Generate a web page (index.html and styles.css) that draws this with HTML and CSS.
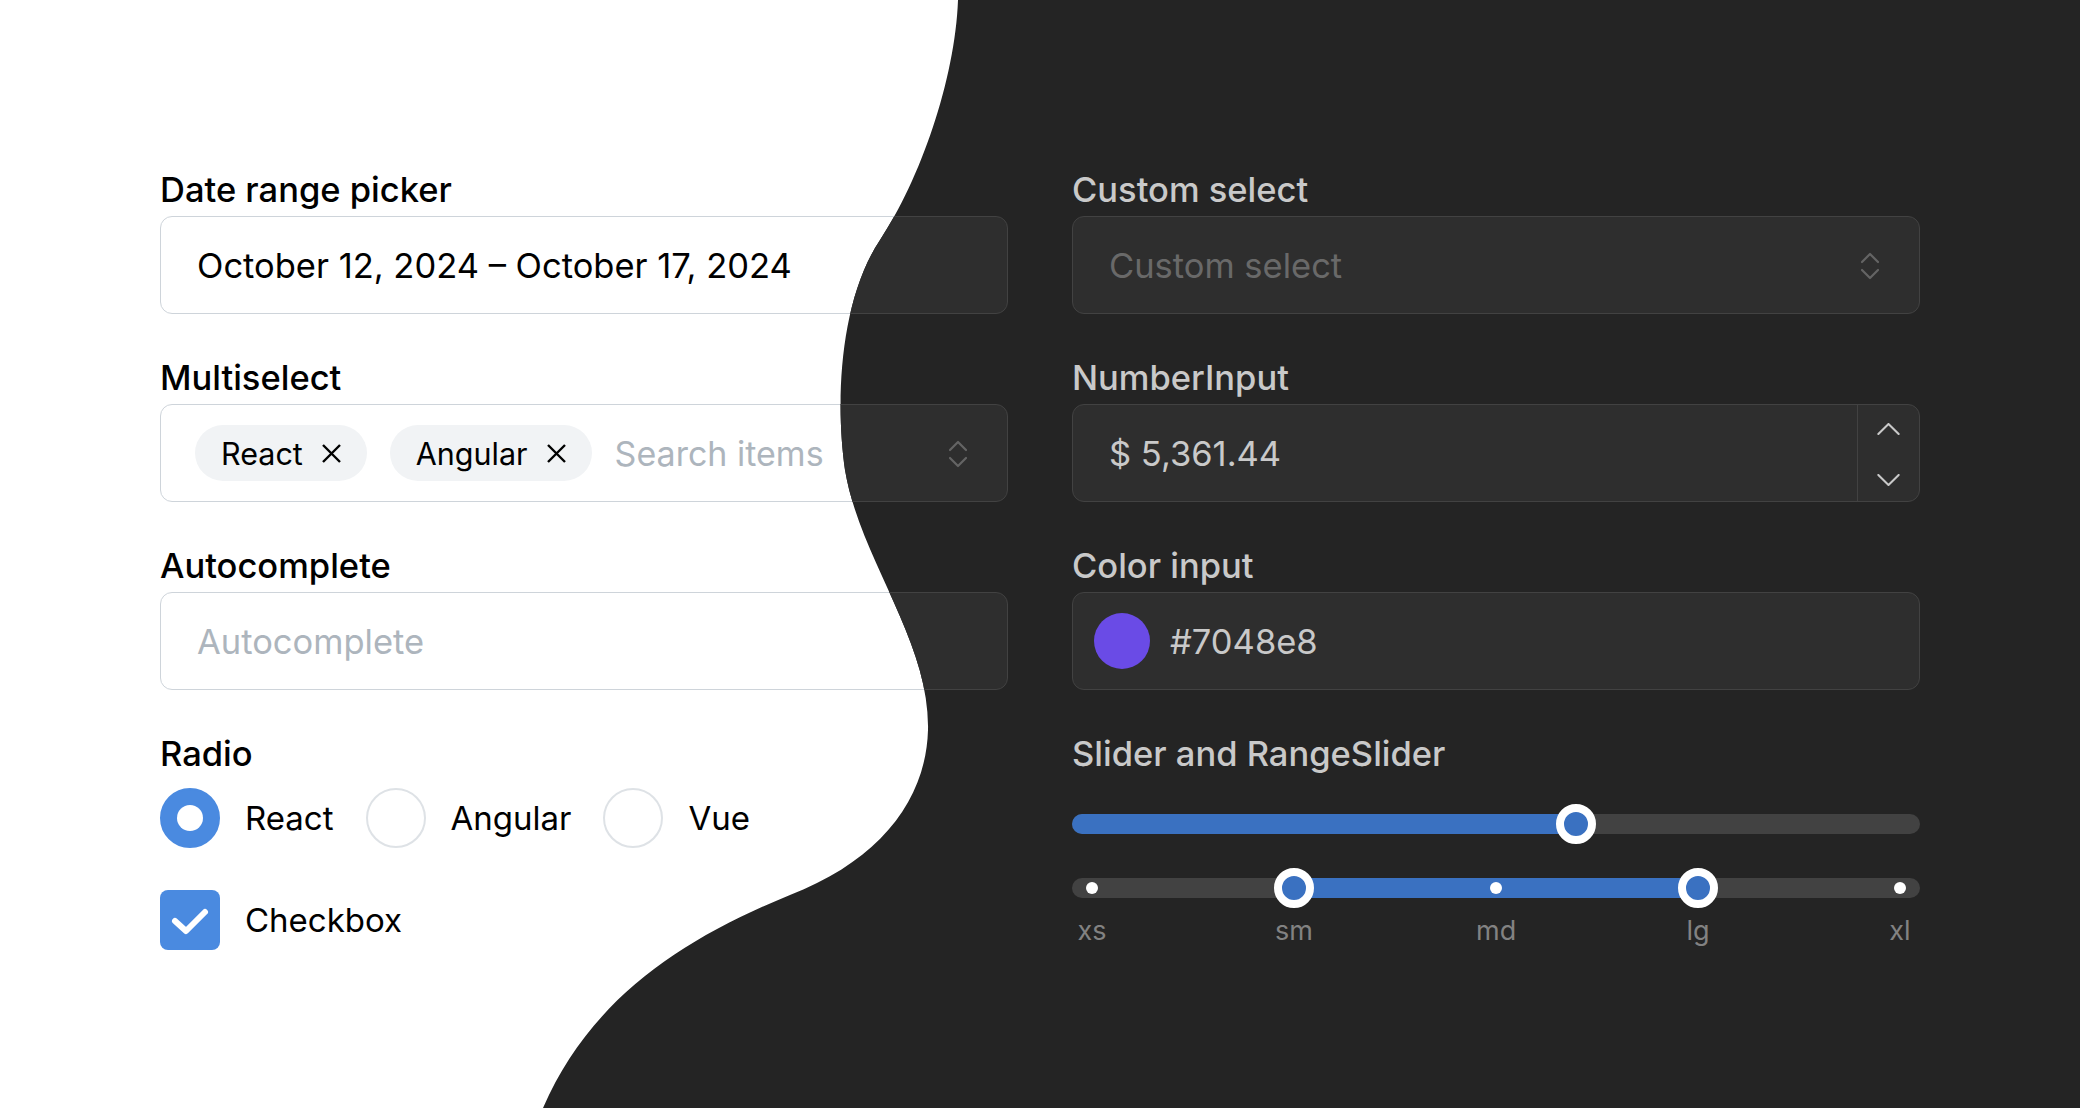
FILE: index.html
```html
<!DOCTYPE html>
<html lang="en">
<head>
<meta charset="utf-8">
<title>Form components</title>
<link rel="stylesheet" href="styles.css">
</head>
<body>
<div class="stage">
  <div class="scene light">
    <div class="col">
      <div class="field">
        <div class="label">Date range picker</div>
        <div class="input"><span class="value">October 12, 2024 – October 17, 2024</span></div>
      </div>
      <div class="field">
        <div class="label">Multiselect</div>
        <div class="input multi">
          <span class="chip">React<svg class="x" viewBox="0 0 21 21"><path d="M2 2L19 19M19 2L2 19"/></svg></span>
          <span class="chip">Angular<svg class="x" viewBox="0 0 21 21"><path d="M2 2L19 19M19 2L2 19"/></svg></span>
          <span class="placeholder">Search items</span>
          <svg class="selector" viewBox="0 0 18 28"><path d="M1 10L9 2L17 10M1 18L9 26L17 18"/></svg>
        </div>
      </div>
      <div class="field">
        <div class="label">Autocomplete</div>
        <div class="input"><span class="placeholder">Autocomplete</span></div>
      </div>
      <div class="field">
        <div class="label">Radio</div>
        <div class="radios">
          <span class="radio checked"></span><span class="opt">React</span>
          <span class="radio"></span><span class="opt">Angular</span>
          <span class="radio"></span><span class="opt">Vue</span>
        </div>
        <div class="checkrow">
          <span class="checkbox"><svg viewBox="0 0 60 60"><path d="M15 31L26 41L45 22"/></svg></span><span class="opt">Checkbox</span>
        </div>
      </div>
    </div>
    <div class="col">
      <div class="field">
        <div class="label">Custom select</div>
        <div class="input"><span class="placeholder">Custom select</span><svg class="selector" viewBox="0 0 18 28"><path d="M1 10L9 2L17 10M1 18L9 26L17 18"/></svg></div>
      </div>
      <div class="field">
        <div class="label">NumberInput</div>
        <div class="input number"><span class="value">$ 5,361.44</span>
          <div class="stepper">
            <span class="step"><svg viewBox="0 0 24 13"><path d="M1 12L12 1L23 12"/></svg></span>
            <span class="step down"><svg viewBox="0 0 24 13"><path d="M1 1L12 12L23 1"/></svg></span>
          </div>
        </div>
      </div>
      <div class="field">
        <div class="label">Color input</div>
        <div class="input color"><span class="swatch"></span><span class="value">#7048e8</span></div>
      </div>
      <div class="field">
        <div class="label">Slider and RangeSlider</div>
        <div class="sliders">
          <div class="slider">
            <div class="track">
              <div class="fill" style="left:0px;width:504px"></div>
              <span class="thumb" style="left:484px"></span>
            </div>
          </div>
          <div class="slider">
            <div class="track">
              <div class="fill" style="left:222px;width:404px"></div>
              <span class="dot" style="left:14px"></span>
              <span class="dot" style="left:418px"></span>
              <span class="dot" style="left:822px"></span>
              <span class="thumb" style="left:202px"></span>
              <span class="thumb" style="left:606px"></span>
            </div>
          </div>
          <div class="marks">
            <span class="mark">xs</span><span class="mark">sm</span><span class="mark">md</span><span class="mark">lg</span><span class="mark">xl</span>
          </div>
        </div>
      </div>
    </div>
  </div>

  <div class="scene dark">
    <div class="col">
      <div class="field">
        <div class="label">Date range picker</div>
        <div class="input"><span class="value">October 12, 2024 – October 17, 2024</span></div>
      </div>
      <div class="field">
        <div class="label">Multiselect</div>
        <div class="input multi">
          <span class="chip">React<svg class="x" viewBox="0 0 21 21"><path d="M2 2L19 19M19 2L2 19"/></svg></span>
          <span class="chip">Angular<svg class="x" viewBox="0 0 21 21"><path d="M2 2L19 19M19 2L2 19"/></svg></span>
          <span class="placeholder">Search items</span>
          <svg class="selector" viewBox="0 0 18 28"><path d="M1 10L9 2L17 10M1 18L9 26L17 18"/></svg>
        </div>
      </div>
      <div class="field">
        <div class="label">Autocomplete</div>
        <div class="input"><span class="placeholder">Autocomplete</span></div>
      </div>
      <div class="field">
        <div class="label">Radio</div>
        <div class="radios">
          <span class="radio checked"></span><span class="opt">React</span>
          <span class="radio"></span><span class="opt">Angular</span>
          <span class="radio"></span><span class="opt">Vue</span>
        </div>
        <div class="checkrow">
          <span class="checkbox"><svg viewBox="0 0 60 60"><path d="M15 31L26 41L45 22"/></svg></span><span class="opt">Checkbox</span>
        </div>
      </div>
    </div>
    <div class="col">
      <div class="field">
        <div class="label">Custom select</div>
        <div class="input"><span class="placeholder">Custom select</span><svg class="selector" viewBox="0 0 18 28"><path d="M1 10L9 2L17 10M1 18L9 26L17 18"/></svg></div>
      </div>
      <div class="field">
        <div class="label">NumberInput</div>
        <div class="input number"><span class="value">$ 5,361.44</span>
          <div class="stepper">
            <span class="step"><svg viewBox="0 0 24 13"><path d="M1 12L12 1L23 12"/></svg></span>
            <span class="step down"><svg viewBox="0 0 24 13"><path d="M1 1L12 12L23 1"/></svg></span>
          </div>
        </div>
      </div>
      <div class="field">
        <div class="label">Color input</div>
        <div class="input color"><span class="swatch"></span><span class="value">#7048e8</span></div>
      </div>
      <div class="field">
        <div class="label">Slider and RangeSlider</div>
        <div class="sliders">
          <div class="slider">
            <div class="track">
              <div class="fill" style="left:0px;width:504px"></div>
              <span class="thumb" style="left:484px"></span>
            </div>
          </div>
          <div class="slider">
            <div class="track">
              <div class="fill" style="left:222px;width:404px"></div>
              <span class="dot" style="left:14px"></span>
              <span class="dot" style="left:418px"></span>
              <span class="dot" style="left:822px"></span>
              <span class="thumb" style="left:202px"></span>
              <span class="thumb" style="left:606px"></span>
            </div>
          </div>
          <div class="marks">
            <span class="mark">xs</span><span class="mark">sm</span><span class="mark">md</span><span class="mark">lg</span><span class="mark">xl</span>
          </div>
        </div>
      </div>
    </div>
  </div>
</div>
</body>
</html>
```

FILE: styles.css
```css
* { box-sizing: border-box; }
html, body { margin: 0; padding: 0; }
body {
  font-family: "Inter", "Noto Sans", sans-serif;
  background: #242424;
}
.stage {
  position: relative;
  width: 2080px;
  height: 1108px;
  overflow: hidden;
}
.scene {
  width: 2080px;
  height: 1108px;
  display: grid;
  grid-template-columns: 848px 848px;
  column-gap: 64px;
  align-content: start;
  padding: 170px 0 0 160px;
}
.scene.light { background: #ffffff; color: #000000; }
.scene.dark {
  position: absolute;
  left: 0;
  top: 0;
  background: #242424;
  color: #c9c9c9;
  clip-path: path("M958 0 C955 80 920 180 880 240 C840 300 835 400 845 470 C860 560 930 640 928 730 C926 800 880 860 790 895 C680 940 590 1000 543 1108 L2080 1108 L2080 0 Z");
}
.col {
  display: flex;
  flex-direction: column;
  gap: 44px;
}
.field { display: flex; flex-direction: column; }
.label {
  font-size: 34.5px;
  font-weight: 500;
  line-height: 40px;
  height: 40px;
  margin-bottom: 6px;
  white-space: nowrap;
}
.input {
  height: 98px;
  border-radius: 12px;
  border: 1px solid #ced4da;
  background: #ffffff;
  display: flex;
  align-items: center;
  padding: 0 36px;
  font-size: 34.5px;
  position: relative;
}
.dark .input { background: #2e2e2e; border-color: #424242; }
.value { white-space: nowrap; }
.placeholder { color: #adb5bd; white-space: nowrap; }
.dark .placeholder { color: #696969; }

.multi { padding-left: 34px; }
.chip {
  display: inline-flex;
  align-items: center;
  height: 56px;
  border-radius: 28px;
  background: #f1f3f5;
  padding: 0 25px 0 26px;
  font-size: 30.5px;
  gap: 18px;
  margin-right: 23px;
  white-space: nowrap;
}
.multi .placeholder { font-size: 34px; }
.dark .chip { background: #1f1f1f; }
.x { width: 21px; height: 21px; fill: none; stroke: currentColor; stroke-width: 2.4; }
.selector {
  position: absolute;
  right: 40px;
  top: 35px;
  width: 18px;
  height: 28px;
  fill: none;
  stroke: #adb5bd;
  stroke-width: 2.2;
  stroke-linecap: round;
  stroke-linejoin: round;
}
.dark .selector { stroke: #646464; }

.number .stepper {
  position: absolute;
  right: 0;
  top: 0;
  bottom: 0;
  width: 62px;
  border-left: 1px solid #ced4da;
  display: flex;
  flex-direction: column;
}
.dark .number .stepper { border-left-color: #424242; }
.step {
  flex: 1;
  display: flex;
  align-items: center;
  justify-content: center;
}
.step.down svg { margin-top: 6px; }
.step svg {
  width: 23px;
  height: 12px;
  fill: none;
  stroke: #c9c9c9;
  stroke-width: 2.2;
  stroke-linecap: round;
  stroke-linejoin: round;
}

.color { padding-left: 21px; gap: 20px; }
.swatch {
  width: 56px;
  height: 56px;
  border-radius: 50%;
  background: #6a4be6;
  flex: none;
}

.radios {
  display: flex;
  align-items: center;
  margin-top: 8px;
  height: 60px;
}
.radio {
  width: 60px;
  height: 60px;
  border-radius: 50%;
  border: 2px solid #dee2e6;
  flex: none;
  position: relative;
}
.radio.checked { background: #4a8ae0; border-color: #4a8ae0; }
.radio.checked::after {
  content: "";
  position: absolute;
  left: 15px;
  top: 15px;
  width: 26px;
  height: 26px;
  border-radius: 50%;
  background: #ffffff;
}
.opt {
  font-size: 33px;
  margin-left: 25px;
  margin-right: 32px;
  white-space: nowrap;
}
.checkrow {
  display: flex;
  align-items: center;
  margin-top: 42px;
  height: 60px;
}
.checkbox {
  width: 60px;
  height: 60px;
  border-radius: 8px;
  background: #4a8ae0;
  flex: none;
}
.checkbox svg {
  width: 60px;
  height: 60px;
  fill: none;
  stroke: #ffffff;
  stroke-width: 6;
  stroke-linecap: round;
  stroke-linejoin: round;
  display: block;
}

.sliders {
  margin-top: 24px;
  display: flex;
  flex-direction: column;
  gap: 24px;
}
.slider {
  height: 40px;
  display: flex;
  align-items: center;
}
.track {
  flex: 1;
  height: 20px;
  border-radius: 10px;
  background: #424242;
  position: relative;
}
.light .track { background: #e9ecef; }
.fill {
  position: absolute;
  top: 0;
  bottom: 0;
  border-radius: 10px;
  background: #3a71c1;
}
.thumb {
  position: absolute;
  top: -10px;
  width: 40px;
  height: 40px;
  border-radius: 50%;
  border: 8px solid #ffffff;
  background: #3a71c1;
}
.dot {
  position: absolute;
  top: 4px;
  width: 12px;
  height: 12px;
  border-radius: 50%;
  background: #ffffff;
}
.marks {
  display: flex;
  justify-content: space-between;
  margin-top: -21px;
}
.mark {
  width: 40px;
  text-align: center;
  font-size: 27px;
  line-height: 40px;
  color: #828282;
}
```
